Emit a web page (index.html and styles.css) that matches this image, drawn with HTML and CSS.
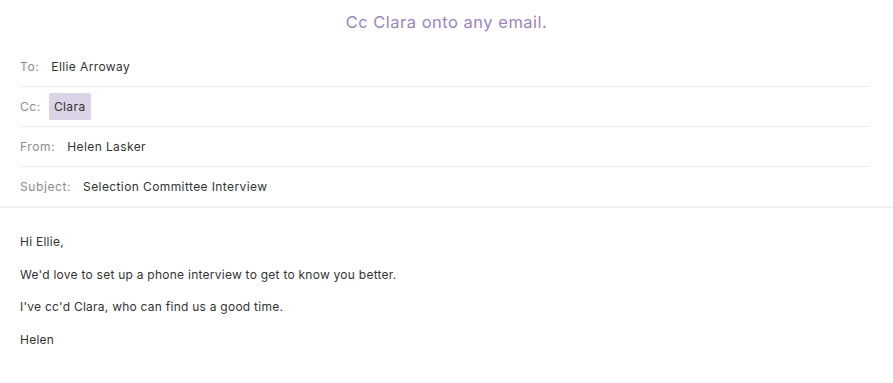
FILE: index.html
```html
<!DOCTYPE html>
<html lang="en">
<head>
    <meta charset="utf-8">
    <title>Cc Clara</title>
    <link rel="stylesheet" href="styles.css">
</head>
<body>
    <h1 class="title">Cc Clara onto any email.</h1>
    <div class="headers">
        <div class="headerRow">
            <span class="label">To:</span>
            <span class="value">Ellie Arroway</span>
        </div>
        <div class="headerRow">
            <span class="label">Cc:</span>
            <span class="chip">Clara</span>
        </div>
        <div class="headerRow">
            <span class="label">From:</span>
            <span class="value">Helen Lasker</span>
        </div>
        <div class="headerRow">
            <span class="label">Subject:</span>
            <span class="value">Selection Committee Interview</span>
        </div>
    </div>
    <div class="message">
        <p>Hi Ellie,</p>
        <p>We'd love to set up a phone interview to get to know you better.</p>
        <p>I've cc'd Clara, who can find us a good time.</p>
        <p>Helen</p>
    </div>
</body>
</html>
```

FILE: styles.css
```css
body {
    margin: 0;
    font-family: Inter, "Liberation Sans", sans-serif;
    color: #333;
    background: #fff;
    letter-spacing: 0.25px;
}

.title {
    margin: 0;
    height: 47px;
    line-height: 45px;
    text-align: center;
    font-size: 16.5px;
    font-weight: normal;
    letter-spacing: 0.5px;
    color: #9c84bb;
}

.headers {
    border-bottom: 2px solid #f2f2f2;
}

.headerRow {
    display: flex;
    align-items: center;
    height: 39px;
    margin: 0 23px 0 20px;
    border-bottom: 1px solid #ececec;
    font-size: 12px;
    letter-spacing: 0.4px;
}
.headerRow:last-child {
    border-bottom: none;
}

.label {
    color: #8c8c8c;
    margin-right: 12px;
    letter-spacing: 0.6px;
}

.value {
    color: #333;
}

.chip {
    margin-left: -4px;
    padding: 6px 5px;
    background: #dcd3e6;
    border-radius: 2px;
    color: #333;
}

.message {
    padding: 18px 20px;
    font-size: 12px;
}
.message p {
    margin: 0;
    line-height: 32.5px;
}
```
